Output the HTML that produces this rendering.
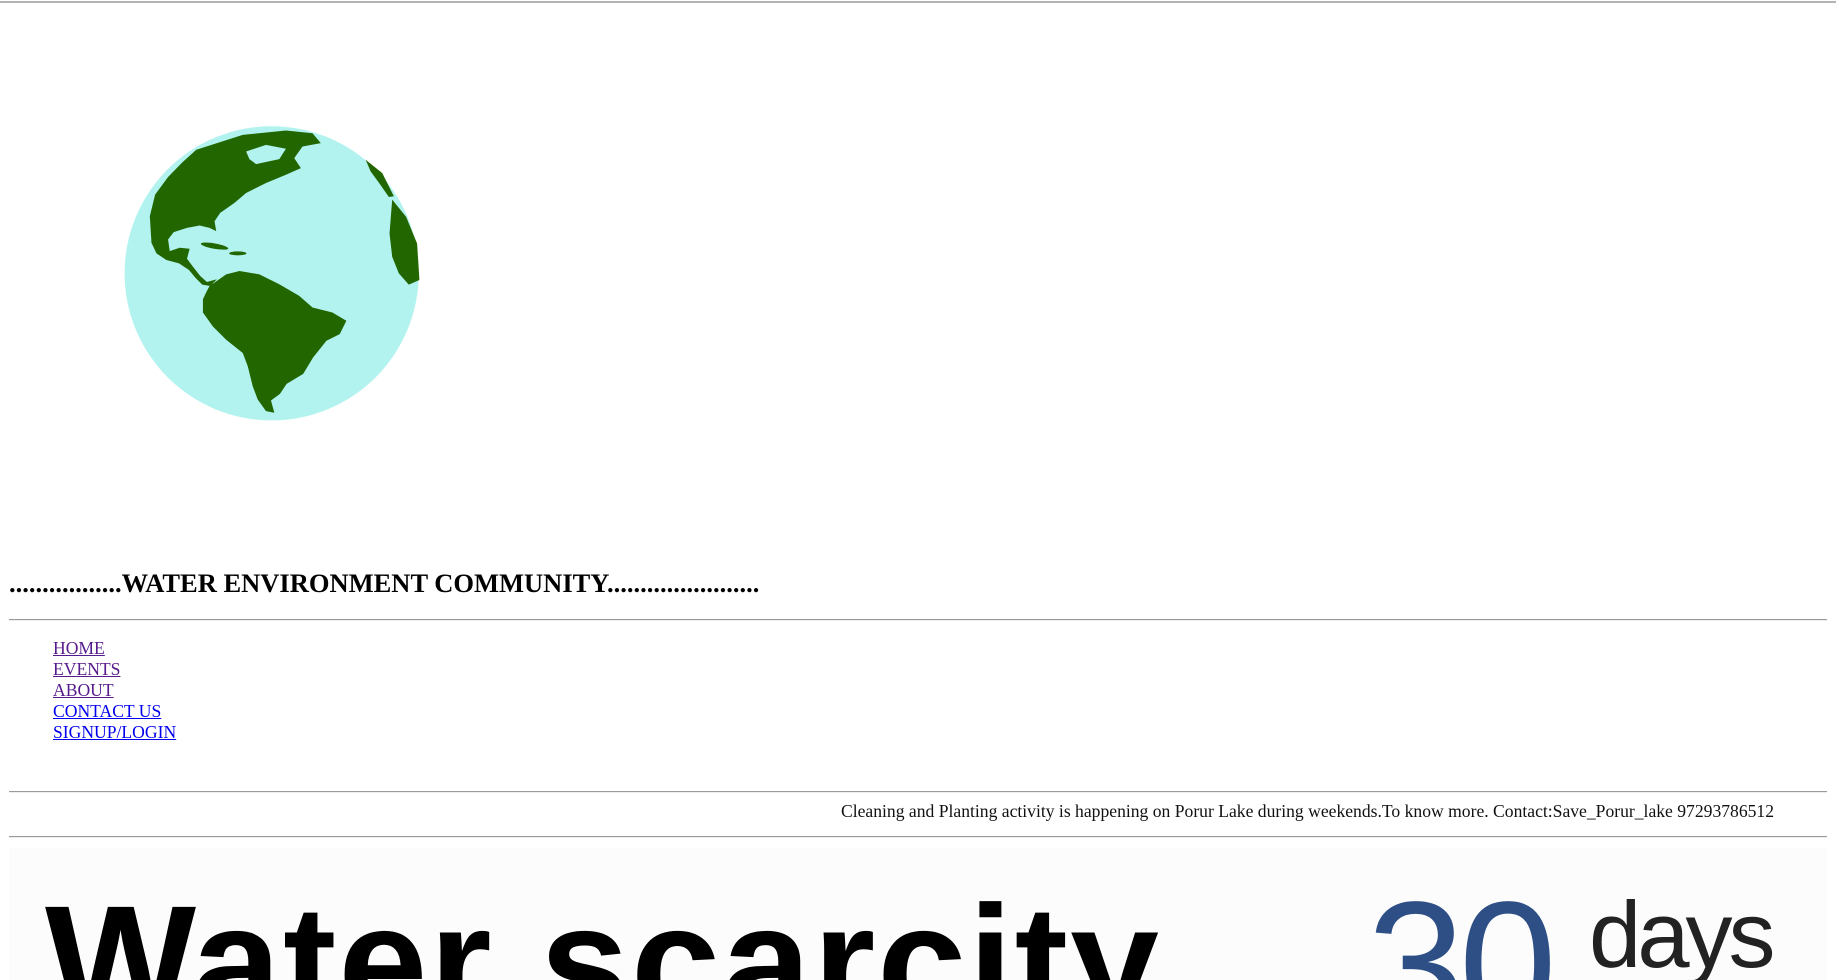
<!DOCTYPE html>
<html><head><meta charset="utf-8">
<style>
html,body{margin:0;padding:0;width:1836px;height:980px;overflow:hidden;background:#fff;font-family:"Liberation Serif",serif;}
.abs{position:absolute;}
.hr{position:absolute;left:9px;width:1818px;height:0;border-top:1px solid #9a9a9a;border-bottom:1px solid #eee;}
a{text-decoration:underline;}
</style></head><body>
<div class="abs" style="left:0;top:1px;width:1836px;height:2px;background:#b4b4b4"></div>

<svg class="abs" style="left:100px;top:100px" width="340" height="340" viewBox="0 0 1024 1024">
<circle cx="517" cy="522" r="443" fill="#b3f3ef"/>
<g fill="#226600">
<path d="M290,150 L430,105 L560,92 L640,100 L665,130 L610,140 L585,175 L605,205 L560,225 L500,250 L440,280 L405,310 L362,340 L345,365 L350,395 L330,385 L300,378 L262,385 L222,398 L205,420 L210,455 L240,445 L270,448 L262,478 L282,505 L302,530 L322,548 L352,540 L332,560 L308,556 L288,536 L268,512 L238,492 L200,482 L170,462 L155,430 L150,350 L166,285 L205,232 L248,188 Z"/>
<path d="M330,560 L380,525 L420,515 L480,525 L540,555 L600,590 L640,625 L700,640 L742,665 L722,705 L682,725 L642,775 L612,825 L562,855 L542,885 L515,905 L525,942 L500,937 L475,902 L460,862 L445,802 L430,762 L380,722 L340,682 L310,640 L310,600 L322,575 Z"/>
<path d="M880,300 L922,352 L955,432 L962,542 L930,556 L900,522 L880,472 L872,402 Z"/>
<path d="M800,180 L850,220 L885,290 L870,292 L842,252 L815,215 Z"/>
<ellipse cx="345" cy="440" rx="42" ry="8" transform="rotate(10 345 440)"/>
<ellipse cx="415" cy="462" rx="26" ry="6"/>
</g>
<path d="M440,155 L500,135 L560,147 L540,178 L470,193 L450,178 Z" fill="#b3f3ef"/>
</svg>

<div class="abs" style="left:9px;top:566px;font-size:26.5px;font-weight:bold;line-height:34px;white-space:nowrap;">.................WATER ENVIRONMENT COMMUNITY.......................</div>
<div class="hr" style="top:619px"></div>

<div class="abs" style="left:53px;top:638px;font-size:17.6px;line-height:21px;">
<a style="color:#551a8b">HOME</a><br>
<a style="color:#551a8b">EVENTS</a><br>
<a style="color:#551a8b">ABOUT</a><br>
<a style="color:#0000ee">CONTACT US</a><br>
<a style="color:#0000ee">SIGNUP/LOGIN</a>
</div>

<div class="hr" style="top:791px"></div>
<div class="abs" style="left:841px;top:801px;font-size:17.6px;line-height:21px;white-space:nowrap;color:#111;">Cleaning and Planting activity is happening on Porur Lake during weekends.To know more. Contact:Save_Porur_lake 97293786512</div>
<div class="hr" style="top:836px"></div>

<div class="abs" style="left:9px;top:848px;width:1818px;height:132px;background:#fcfcfc;overflow:hidden;">
<div class="abs" style="left:36px;top:34px;font-family:'Liberation Sans',sans-serif;font-weight:bold;font-size:160px;line-height:1;letter-spacing:2px;color:#000;white-space:nowrap;">Water scarcity</div>
<div class="abs" style="left:1358px;top:28px;font-family:'Liberation Sans',sans-serif;font-size:176px;line-height:1;color:#2d4f86;letter-spacing:-6px;white-space:nowrap;">30</div>
<div class="abs" style="left:1580px;top:40px;font-family:'Liberation Sans',sans-serif;font-size:94px;line-height:1;color:#222;letter-spacing:-4px;white-space:nowrap;">days</div>
</div>
</body></html>
